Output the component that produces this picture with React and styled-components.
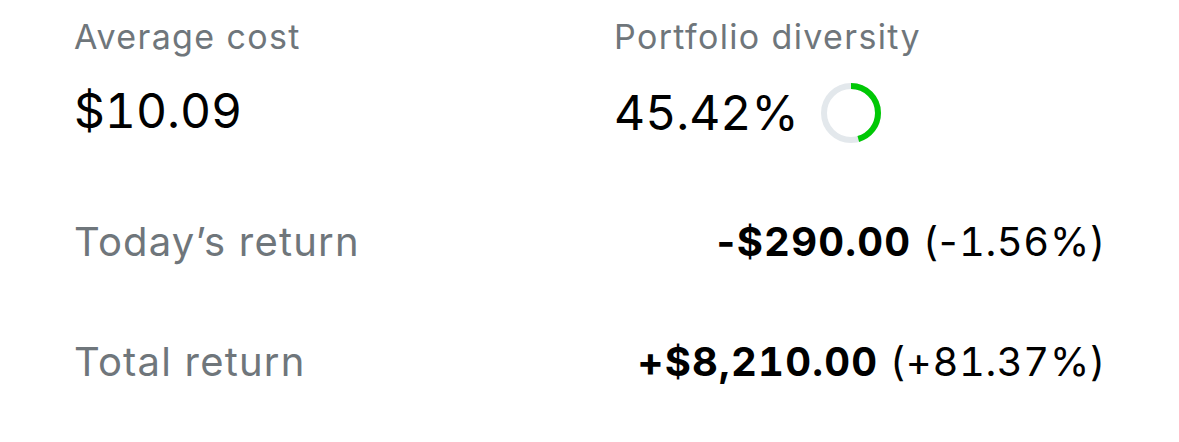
import React from "react";
import styled, { createGlobalStyle } from "styled-components";

const GlobalStyle = createGlobalStyle`
  html, body {
    margin: 0;
    padding: 0;
    background: #fff;
    font-family: Inter, "Noto Sans", sans-serif;
    -webkit-font-smoothing: antialiased;
  }
`;

const Page = styled.div`
  padding: 17px 73px 0 74px;
`;

//STATS
const Stats = styled.div`
  display: grid;
  grid-template-columns: 540px 1fr;
`;
const Stat = styled.div`
  display: flex;
  flex-direction: column;
  gap: 26px;
`;
const StatLabel = styled.div`
  font-size: 34px;
  line-height: 40px;
  letter-spacing: 0.04em;
  color: #6f767b;
`;
const StatValue = styled.div`
  display: flex;
  align-items: center;
  gap: 22px;
  font-size: 48px;
  line-height: 56px;
  font-variant-numeric: tabular-nums;
  color: #000;
`;

//RETURNS
const Returns = styled.div`
  display: flex;
  flex-direction: column;
  gap: 72px;
  margin-top: 75px;
`;
const Row = styled.div`
  display: flex;
  justify-content: space-between;
  align-items: baseline;
  font-size: 40px;
  line-height: 48px;
`;
const RowLabel = styled.span`
  color: #6f767b;
  letter-spacing: 0.03em;
`;
const RowValue = styled.span`
  color: #000;
  font-variant-numeric: tabular-nums;
  letter-spacing: 0.015em;
  b {
    font-weight: 700;
    letter-spacing: 0.03em;
  }
`;
const Sign = styled.span`
  font-variant-numeric: normal;
  letter-spacing: 0.04em;
`;

function Ring({ value, size = 60, stroke = 6 }) {
  const r = (size - stroke) / 2;
  const c = 2 * Math.PI * r;
  return (
    <svg width={size} height={size} viewBox={`0 0 ${size} ${size}`}>
      <circle cx={size / 2} cy={size / 2} r={r} fill="none" stroke="#e3e8ec" strokeWidth={stroke} />
      <circle
        cx={size / 2}
        cy={size / 2}
        r={r}
        fill="none"
        stroke="#00c805"
        strokeWidth={stroke}
        strokeDasharray={`${(c * value) / 100} ${c}`}
        transform={`rotate(-90 ${size / 2} ${size / 2})`}
      />
    </svg>
  );
}

export default function App() {
  return (
    <>
      <GlobalStyle />
      <Page>
        <Stats>
          <Stat>
            <StatLabel>Average cost</StatLabel>
            <StatValue>$10.09</StatValue>
          </Stat>
          <Stat>
            <StatLabel>Portfolio diversity</StatLabel>
            <StatValue>
              45.42%
              <Ring value={45.42} />
            </StatValue>
          </Stat>
        </Stats>
        <Returns>
          <Row>
            <RowLabel>Today’s return</RowLabel>
            <RowValue>
              <b><Sign>-</Sign>$290.00</b> (<Sign>-</Sign>1.56%)
            </RowValue>
          </Row>
          <Row>
            <RowLabel>Total return</RowLabel>
            <RowValue>
              <b>+$8,210.00</b> (+81.37%)
            </RowValue>
          </Row>
        </Returns>
      </Page>
    </>
  );
}
